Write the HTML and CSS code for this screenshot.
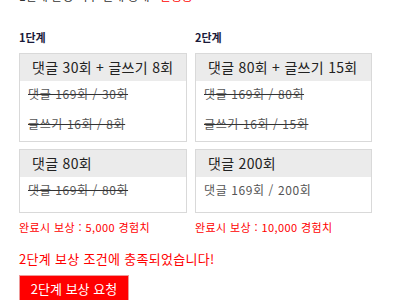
FILE: index.html
```html
<!DOCTYPE html>
<html lang="ko">
<head>
    <meta charset="UTF-8">
    <meta name="viewport" content="width=device-width, initial-scale=1.0">
    <title>단계별 미션</title>
    <link rel="stylesheet" href="styles.css">
</head>
<body>
    <div class="mission">
        <p class="state">1단계 달성 여부 현재 상태 : <span class="red">진행중</span></p>

        <div class="steps">
            <div class="step">
                <h3>1단계</h3>
                <div class="card">
                    <div class="card-head">댓글 30회 + 글쓰기 8회</div>
                    <div class="card-body">
                        <p class="done">댓글 169회 / 30회</p>
                        <p class="done">글쓰기 16회 / 8회</p>
                    </div>
                </div>
                <div class="card">
                    <div class="card-head">댓글 80회</div>
                    <div class="card-body">
                        <p class="done">댓글 169회 / 80회</p>
                    </div>
                </div>
                <p class="reward">완료시 보상 : 5,000 경험치</p>
            </div>

            <div class="step">
                <h3>2단계</h3>
                <div class="card">
                    <div class="card-head">댓글 80회 + 글쓰기 15회</div>
                    <div class="card-body">
                        <p class="done">댓글 169회 / 80회</p>
                        <p class="done">글쓰기 16회 / 15회</p>
                    </div>
                </div>
                <div class="card">
                    <div class="card-head">댓글 200회</div>
                    <div class="card-body">
                        <p>댓글 169회 / 200회</p>
                    </div>
                </div>
                <p class="reward">완료시 보상 : 10,000 경험치</p>
            </div>
        </div>

        <p class="notice">2단계 보상 조건에 충족되었습니다!</p>
        <button class="claim-btn">2단계 보상 요청</button>
    </div>
</body>
</html>
```

FILE: styles.css
```css
* {
    margin: 0;
    padding: 0;
    box-sizing: border-box;
    font-family: 'Noto Sans CJK KR', 'Noto Sans', sans-serif;
}

body {
    background: white;
    color: #333;
}

.mission {
    padding: 0 0 0 19px;
    margin-top: -12px;
}

.state {
    font-size: 12px;
    line-height: 16px;
    color: #333;
}

.red {
    color: #f00;
}

.steps {
    display: grid;
    grid-template-columns: 168px 177px;
    gap: 8px;
    margin-top: 26px;
}

.step h3 {
    font-size: 11px;
    font-weight: bold;
    color: #1a1a3a;
    line-height: 14px;
    margin-bottom: 9px;
}

.card {
    border: 1px solid #d9d9d9;
    margin-bottom: 7px;
}

.card-head {
    background: #ebebeb;
    height: 27px;
    line-height: 27px;
    padding: 0 12px;
    font-size: 14px;
    letter-spacing: 0.3px;
    color: #222;
    white-space: nowrap;
}

.card-body {
    display: flex;
    flex-direction: column;
    gap: 4px;
    padding: 0 8px 4px;
    min-height: 35px;
}

.card-body p {
    font-size: 12px;
    line-height: 26px;
    letter-spacing: 0.6px;
    color: #555;
    white-space: nowrap;
}

.card-body .done {
    text-decoration: line-through;
    text-decoration-color: #333;
}

.reward {
    font-size: 11px;
    color: #f00;
    line-height: 14px;
    letter-spacing: 0.4px;
    margin-top: 4px;
}

.notice {
    font-size: 13px;
    color: #f00;
    line-height: 16px;
    letter-spacing: 0.3px;
    margin-top: 17px;
}

.claim-btn {
    margin-top: 8px;
    background: #f00;
    color: white;
    border: 1px solid #e99;
    font-size: 13px;
    text-align: center;
    height: 26px;
    width: 110px;
    white-space: nowrap;
}
```
